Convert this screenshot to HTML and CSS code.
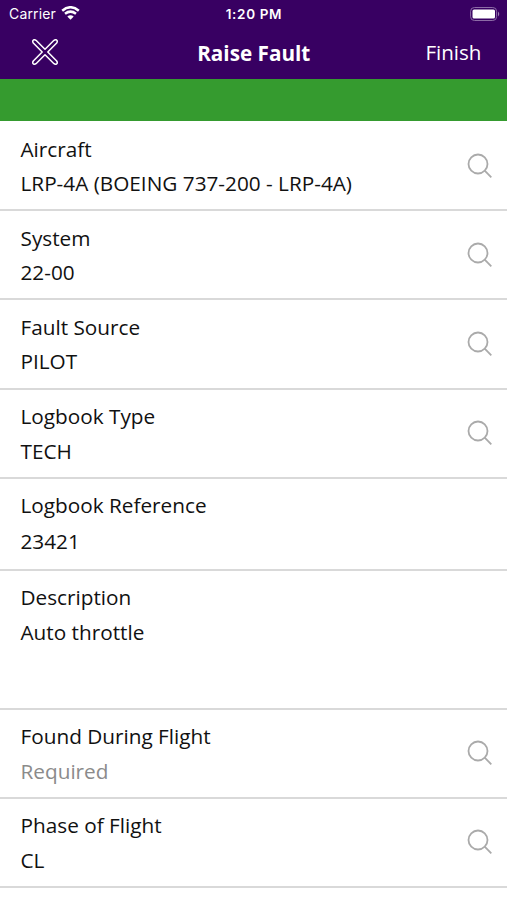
FILE: index.html
```html
<!DOCTYPE html>
<html lang="en">
<head>
<meta charset="utf-8">
<title>Raise Fault</title>
<link rel="stylesheet" href="styles.css">
</head>
<body>
<svg class="defs" width="0" height="0"><symbol id="search" viewBox="0 0 26 26"><circle cx="11" cy="11" r="9.5"/><path d="M17.7 17.7L24.3 24.3"/></symbol></svg>
<header>
  <div class="status">
    <div class="carrier"><span>Carrier</span>
      <svg width="19" height="14" viewBox="0 0 19 14"><path d="M1.2 4.7Q9.5-2.2 17.8 4.7M4 7.8Q9.5 3.5 15 7.8" fill="none" stroke="#fff" stroke-width="2.5"/><path d="M6.3 10.4Q9.5 8 12.7 10.4L9.5 13.7Z" fill="#fff"/></svg>
    </div>
    <div class="time">1:20 PM</div>
    <svg class="battery" width="30" height="14" viewBox="0 0 30 14"><rect x=".6" y=".5" width="26" height="13" rx="3.8" fill="none" stroke="#8c6ba6"/><rect x="2.5" y="2.5" width="22.5" height="9" rx="1.6" fill="#fff"/><path d="M28 4.5Q30.5 7 28 9.5Z" fill="#9b80b2"/></svg>
  </div>
  <nav>
    <svg class="close" width="26" height="26" viewBox="0 0 26 26"><path d="M1.3 4Q.2 2.2 1.2 1.2Q2.2.2 4 1.3L13 10.2L22 1.3Q23.8.2 24.8 1.2Q25.8 2.2 24.7 4L15.8 13L24.7 22Q25.8 23.8 24.8 24.8Q23.8 25.8 22 24.7L13 15.8L4 24.7Q2.2 25.8 1.2 24.8Q.2 23.8 1.3 22L10.2 13Z" fill="none" stroke="#fff" stroke-width="1.5" stroke-linejoin="round"/></svg>
    <h1>Raise Fault</h1>
    <span class="finish">Finish</span>
  </nav>
</header>
<div class="banner"></div>
<main>
  <section class="row first"><div><p>Aircraft</p><p>LRP-4A (BOEING 737-200 - LRP-4A)</p></div><svg class="search"><use href="#search"/></svg></section>
  <section class="row"><div><p>System</p><p>22-00</p></div><svg class="search"><use href="#search"/></svg></section>
  <section class="row"><div><p>Fault Source</p><p>PILOT</p></div><svg class="search"><use href="#search"/></svg></section>
  <section class="row"><div><p>Logbook Type</p><p>TECH</p></div><svg class="search"><use href="#search"/></svg></section>
  <section class="row reference"><div><p>Logbook Reference</p><p>23421</p></div></section>
  <section class="row description"><div><p>Description</p><p>Auto throttle</p></div></section>
  <section class="row"><div><p>Found During Flight</p><p class="hint">Required</p></div><svg class="search"><use href="#search"/></svg></section>
  <section class="row last"><div><p>Phase of Flight</p><p>CL</p></div><svg class="search"><use href="#search"/></svg></section>
</main>
</body>
</html>
```

FILE: styles.css
```css
* { box-sizing: border-box; }
body { margin: 0; height: 900px; overflow: hidden; background: #fff; color: #111; font-family: "Open Sans", sans-serif; }
.defs { display: none; }
header { height: 79px; background: #380062; color: #fff; }
.status { height: 26px; display: grid; grid-template-columns: 1fr auto 1fr; align-items: center; padding: 0 7px 0 9px; font: 14px/26px Inter, sans-serif; }
.carrier { display: flex; align-items: center; gap: 5px; letter-spacing: 0.15px; }
.carrier svg { margin-top: -1px; }
.time { margin-right: 1px; padding-top: 1px; font-size: 13.5px; font-weight: 600; letter-spacing: 0.65px; }
.battery { justify-self: end; }
nav { height: 52px; display: grid; grid-template-columns: 1fr auto 1fr; grid-template-rows: 52px; align-items: center; padding: 0 25.5px 0 26px; }
.close { margin-left: 6px; }
h1 { margin: 0; padding-top: 2px; font-size: 20.7px; line-height: 30px; font-weight: 700; }
.finish { justify-self: end; font-size: 20.6px; line-height: 30px; }
.banner { height: 42px; background: #359b2f; }
.row { height: 89.25px; display: flex; justify-content: space-between; padding: 9.5px 14px 0 20.5px; border-bottom: 2px solid #d9d9d9; font-size: 20.75px; line-height: 34.7px; }
.row p { margin: 0; white-space: nowrap; }
.first { height: 90px; padding-top: 10.5px; }
.reference { height: 92px; padding-top: 9px; line-height: 35.5px; }
.reference p + p { padding-top: 0.7px; }
.description { height: 139px; padding-top: 9.2px; }
.last { padding-top: 9px; }
.row .hint { color: #8b8b8b; }
.search { width: 26px; height: 26px; margin-top: 21px; fill: none; stroke: #aaa; stroke-width: 1.8; }
```
